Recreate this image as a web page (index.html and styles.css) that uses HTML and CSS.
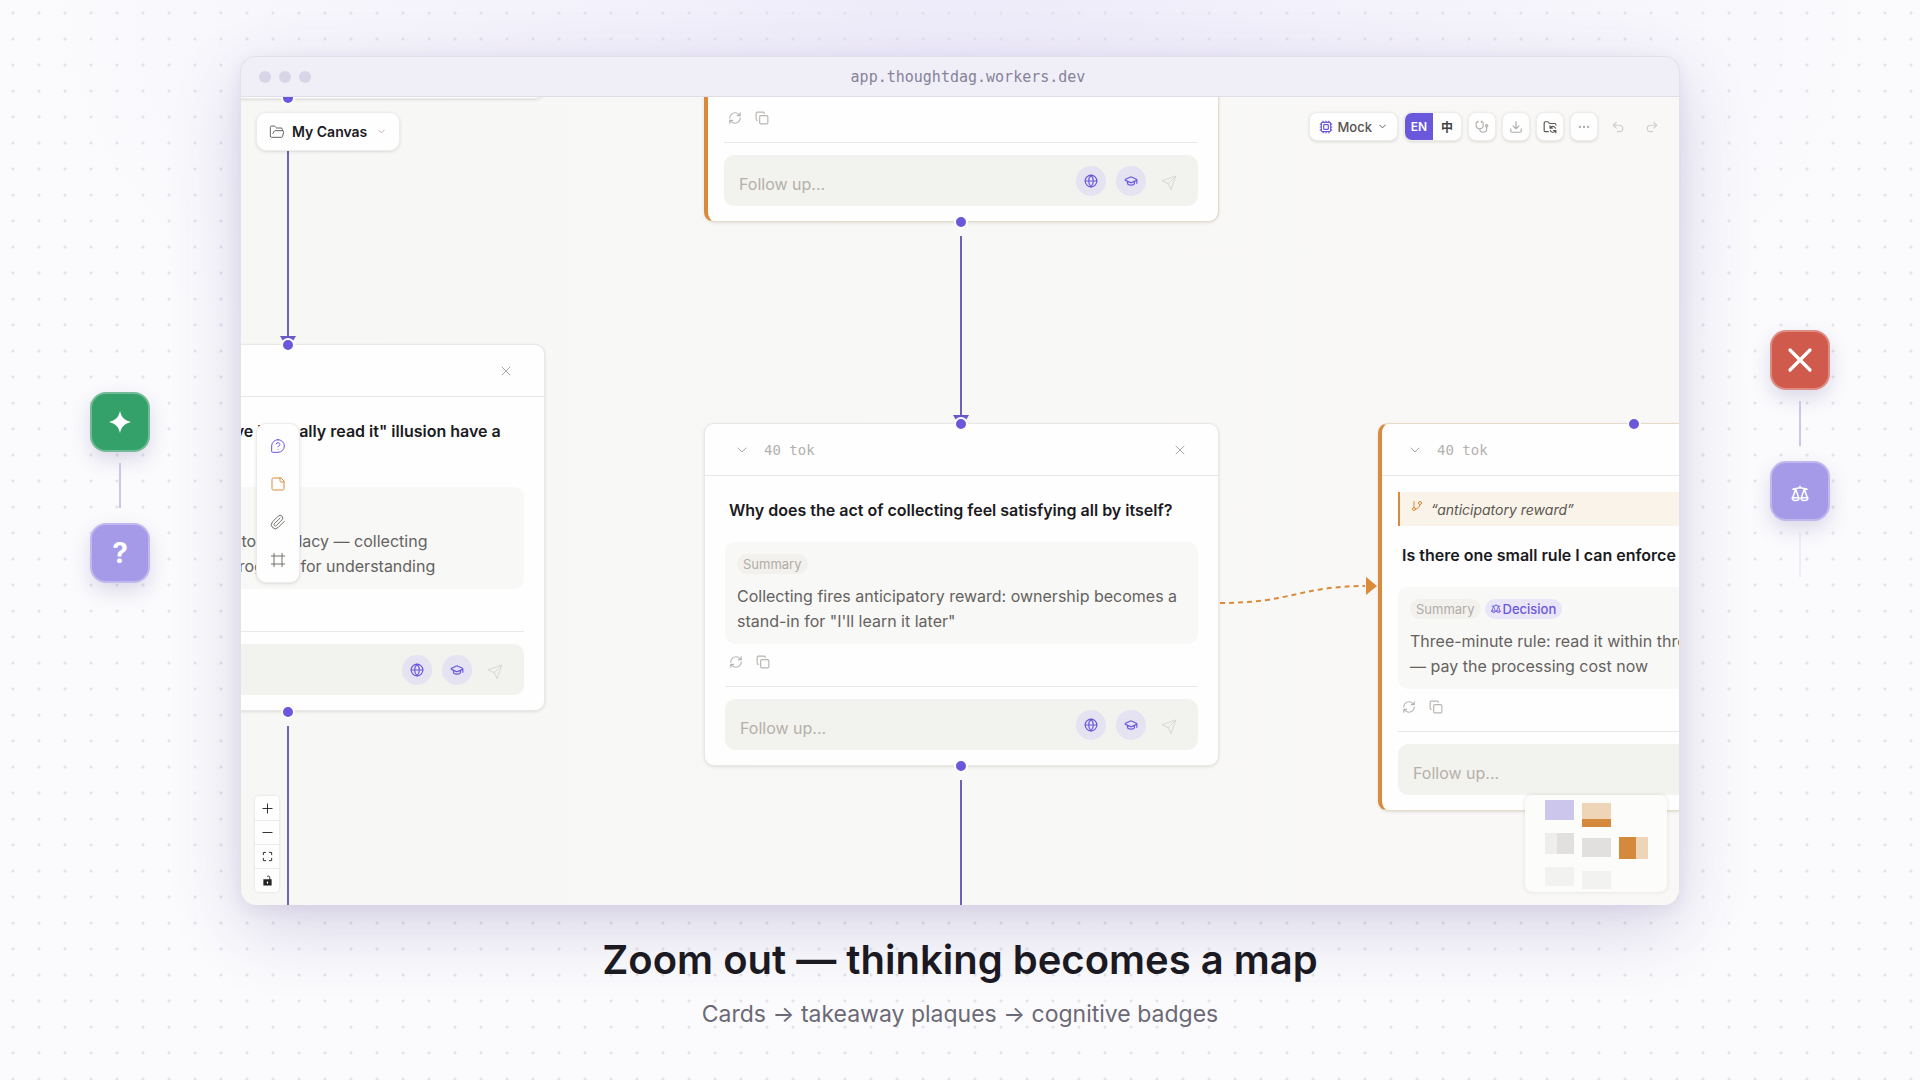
FILE: index.html
```html
<!DOCTYPE html>
<html lang="en">
<head>
<meta charset="utf-8">
<meta name="viewport" content="width=device-width, initial-scale=1">
<title>Zoom out — thinking becomes a map</title>
<link rel="stylesheet" href="styles.css">
</head>
<body>
<svg class="sprite" aria-hidden="true">
  <symbol id="folder-open" viewBox="0 0 24 24"><path d="m6 14 1.5-2.9A2 2 0 0 1 9.24 10H20a2 2 0 0 1 1.94 2.5l-1.54 6a2 2 0 0 1-1.95 1.5H4a2 2 0 0 1-2-2V5a2 2 0 0 1 2-2h3.9a2 2 0 0 1 1.69.9l.81 1.2a2 2 0 0 0 1.67.9H18a2 2 0 0 1 2 2v2"/></symbol>
  <symbol id="chevron" viewBox="0 0 24 24"><path d="m6 9 6 6 6-6"/></symbol>
  <symbol id="close" viewBox="0 0 24 24"><path d="M18 6 6 18M6 6l12 12"/></symbol>
  <symbol id="cpu" viewBox="0 0 24 24"><rect x="4" y="4" width="16" height="16" rx="2"/><rect x="8" y="8" width="8" height="8" rx="1"/><path d="M12 20v2M12 2v2M17 20v2M17 2v2M2 12h2M2 17h2M2 7h2M20 12h2M20 17h2M20 7h2M7 20v2M7 2v2"/></symbol>
  <symbol id="stethoscope" viewBox="0 0 24 24"><path d="M11 2v2M5 2v2M5 3H4a2 2 0 0 0-2 2v4a6 6 0 0 0 12 0V5a2 2 0 0 0-2-2h-1M8 15a6 6 0 0 0 12 0v-3"/><circle cx="20" cy="10" r="2"/></symbol>
  <symbol id="download" viewBox="0 0 24 24"><path d="M12 15V3M21 15v4a2 2 0 0 1-2 2H5a2 2 0 0 1-2-2v-4M7 10l5 5 5-5"/></symbol>
  <symbol id="folder-sync" viewBox="0 0 24 24"><path d="M9 20H4a2 2 0 0 1-2-2V5a2 2 0 0 1 2-2h3.9a2 2 0 0 1 1.69.9l.81 1.2a2 2 0 0 0 1.67.9H20a2 2 0 0 1 2 2v.5M12 10v4h4M12 14l1.500-1.600a4.900 4.900 0 0 1 8 1.600M22 22v-4h-4M22 18l-1.500 1.600a4.900 4.900 0 0 1-8-1.600"/></symbol>
  <symbol id="ellipsis" viewBox="0 0 24 24"><circle cx="12" cy="12" r="1"/><circle cx="19" cy="12" r="1"/><circle cx="5" cy="12" r="1"/></symbol>
  <symbol id="undo" viewBox="0 0 24 24"><path d="M9 14 4 9l5-5"/><path d="M4 9h10.500a5.500 5.500 0 0 1 0 11H11"/></symbol>
  <symbol id="redo" viewBox="0 0 24 24"><path d="m15 14 5-5-5-5"/><path d="M20 9H9.500a5.500 5.500 0 0 0 0 11H13"/></symbol>
  <symbol id="question" viewBox="0 0 24 24"><path d="M12 2.500a9.500 9.500 0 1 1 0 19H3.500a1 1 0 0 1-1-1V12A9.500 9.500 0 0 1 12 2.500Z"/><path d="M9.090 9a3 3 0 0 1 5.830 1c0 2-3 3-3 3M12 17h.01"/></symbol>
  <symbol id="note" viewBox="0 0 24 24"><path d="M16 3H5a2 2 0 0 0-2 2v14a2 2 0 0 0 2 2h14a2 2 0 0 0 2-2V8Z"/><path d="M15 3v4a2 2 0 0 0 2 2h4"/></symbol>
  <symbol id="clip" viewBox="0 0 24 24"><path d="m21.440 11.050-9.190 9.190a6 6 0 0 1-8.490-8.490l8.570-8.570A4 4 0 1 1 18 8.840l-8.590 8.570a2 2 0 0 1-2.830-2.830l8.490-8.480"/></symbol>
  <symbol id="frame" viewBox="0 0 24 24"><path d="M22 6H2M22 18H2M6 2v20M18 2v20"/></symbol>
  <symbol id="refresh" viewBox="0 0 24 24"><path d="M3 12a9 9 0 0 1 9-9 9.750 9.750 0 0 1 6.740 2.740L21 8M21 3v5h-5M21 12a9 9 0 0 1-9 9 9.750 9.750 0 0 1-6.740-2.740L3 16M8 16H3v5"/></symbol>
  <symbol id="copy" viewBox="0 0 24 24"><rect x="8" y="8" width="14" height="14" rx="2"/><path d="M4 16c-1.100 0-2-.9-2-2V4c0-1.100.9-2 2-2h10c1.100 0 2 .9 2 2"/></symbol>
  <symbol id="globe" viewBox="0 0 24 24"><circle cx="12" cy="12" r="10"/><path d="M12 2a14.500 14.500 0 0 0 0 20 14.500 14.500 0 0 0 0-20M2 12h20"/></symbol>
  <symbol id="cap" viewBox="0 0 24 24"><path d="M21.420 10.920a1 1 0 0 0-.02-1.840L12.830 5.180a2 2 0 0 0-1.660 0L2.600 9.080a1 1 0 0 0 0 1.830l8.570 3.910a2 2 0 0 0 1.660 0zM22 10v6M6 12.500V16a6 3 0 0 0 12 0v-3.500"/></symbol>
  <symbol id="send" viewBox="0 0 24 24"><path d="m22 2-7 20-4-9-9-4ZM22 2 11 13"/></symbol>
  <symbol id="branch" viewBox="0 0 24 24"><path d="M6 3v12M18 9a9 9 0 0 1-9 9"/><circle cx="18" cy="6" r="3"/><circle cx="6" cy="18" r="3"/></symbol>
  <symbol id="plus" viewBox="0 0 24 24"><path d="M12 2v20M2 12h20"/></symbol>
  <symbol id="minus" viewBox="0 0 24 24"><path d="M2 12h20"/></symbol>
  <symbol id="fit" viewBox="0 0 24 24"><path d="M3 8V3h5M16 3h5v5M21 16v5h-5M8 21H3v-5"/></symbol>
  <symbol id="unlock" viewBox="0 0 24 24"><path class="solid" d="M3 9h18v14H3ZM12 14a2 2 0 0 0-1 3.700V19h2v-1.300a2 2 0 0 0-1-3.700Z"/><path d="M17 10V6a3.500 3.500 0 0 0-5-3.500"/></symbol>
  <symbol id="scales" viewBox="0 0 24 24"><path d="M2.500 5.500C7 5.500 9 3.500 12 3.500s5 2 9.500 2M12 1.500v2M6.300 5.500 2.200 17M6.300 5.500 10.200 17M17.700 5.500 13.800 17M17.700 5.500 21.800 17M1.500 17h9.300c0 5-9.300 5-9.300 0ZM13.200 17h9.300c0 5-9.300 5-9.300 0Z"/></symbol>
  <symbol id="spark" viewBox="0 0 24 24"><path class="solid" d="M12 0c1.600 7 5 10.400 12 12-7 1.600-10.400 5-12 12-1.600-7-5-10.400-12-12C7 10.400 10.400 7 12 0Z"/></symbol>
</svg>

<main class="stage">
  <div class="scene">
    <aside class="trail trail-left">
      <span class="badge badge-green"><svg class="icon icon-lg"><use href="#spark"/></svg></span>
      <span class="link"></span>
      <span class="badge badge-violet">?</span>
    </aside>

    <section class="window">
      <header class="titlebar">
        <span class="lights"><i></i><i></i><i></i></span>
        <span class="url">app.thoughtdag.workers.dev</span>
      </header>

      <div class="canvas">
        <article class="node node-above"></article>

        <article class="node node-branch node-top">
          <div class="body">
            <div class="actions">
              <button aria-label="Regenerate"><svg class="icon"><use href="#refresh"/></svg></button>
              <button aria-label="Copy"><svg class="icon"><use href="#copy"/></svg></button>
            </div>
            <form class="ask">
              <input type="text" placeholder="Follow up..." aria-label="Follow up">
              <button type="button" class="round" aria-label="Web search"><svg class="icon"><use href="#globe"/></svg></button>
              <button type="button" class="round" aria-label="Scholar"><svg class="icon"><use href="#cap"/></svg></button>
              <button type="button" class="send" aria-label="Send"><svg class="icon icon-md"><use href="#send"/></svg></button>
            </form>
          </div>
        </article>

        <article class="node node-left">
          <header class="head">
            <button class="end" aria-label="Close"><svg class="icon icon-md"><use href="#close"/></svg></button>
          </header>
          <div class="body">
            <h2>Does an "I saved it so I've basically read it" illusion have a<br>name?</h2>
            <div class="summary">
              <span class="tags"><span class="tag">Summary</span></span>
              <p>That is called the collector's fallacy — collecting<br>that means swapping progress for understanding</p>
            </div>
            <div class="actions">
              <button aria-label="Regenerate"><svg class="icon"><use href="#refresh"/></svg></button>
              <button aria-label="Copy"><svg class="icon"><use href="#copy"/></svg></button>
            </div>
            <form class="ask">
              <input type="text" aria-label="Follow up">
              <button type="button" class="round" aria-label="Web search"><svg class="icon"><use href="#globe"/></svg></button>
              <button type="button" class="round" aria-label="Scholar"><svg class="icon"><use href="#cap"/></svg></button>
              <button type="button" class="send" aria-label="Send"><svg class="icon icon-md"><use href="#send"/></svg></button>
            </form>
          </div>
        </article>

        <article class="node node-center">
          <header class="head">
            <button aria-label="Collapse"><svg class="icon icon-md"><use href="#chevron"/></svg></button>
            <span class="tokens">40 tok</span>
            <button class="end" aria-label="Close"><svg class="icon icon-md"><use href="#close"/></svg></button>
          </header>
          <div class="body">
            <h2>Why does the act of collecting feel satisfying all by itself?</h2>
            <div class="summary">
              <span class="tags"><span class="tag">Summary</span></span>
              <p>Collecting fires anticipatory reward: ownership becomes a<br>stand-in for "I'll learn it later"</p>
            </div>
            <div class="actions">
              <button aria-label="Regenerate"><svg class="icon"><use href="#refresh"/></svg></button>
              <button aria-label="Copy"><svg class="icon"><use href="#copy"/></svg></button>
            </div>
            <form class="ask">
              <input type="text" placeholder="Follow up..." aria-label="Follow up">
              <button type="button" class="round" aria-label="Web search"><svg class="icon"><use href="#globe"/></svg></button>
              <button type="button" class="round" aria-label="Scholar"><svg class="icon"><use href="#cap"/></svg></button>
              <button type="button" class="send" aria-label="Send"><svg class="icon icon-md"><use href="#send"/></svg></button>
            </form>
          </div>
        </article>

        <article class="node node-branch node-right">
          <header class="head">
            <button aria-label="Collapse"><svg class="icon icon-md"><use href="#chevron"/></svg></button>
            <span class="tokens">40 tok</span>
          </header>
          <div class="body">
            <blockquote><svg class="icon"><use href="#branch"/></svg><em>“anticipatory reward”</em></blockquote>
            <h2>Is there one small rule I can enforce on myself?</h2>
            <div class="summary">
              <span class="tags"><span class="tag">Summary</span><span class="tag tag-decision"><svg class="icon icon-xs"><use href="#scales"/></svg>Decision</span></span>
              <p>Three-minute rule: read it within three minutes<br>— pay the processing cost now</p>
            </div>
            <div class="actions">
              <button aria-label="Regenerate"><svg class="icon"><use href="#refresh"/></svg></button>
              <button aria-label="Copy"><svg class="icon"><use href="#copy"/></svg></button>
            </div>
            <form class="ask">
              <input type="text" placeholder="Follow up..." aria-label="Follow up">
            </form>
          </div>
        </article>

        <svg class="edges" aria-hidden="true">
          <g class="flow">
            <path d="M47 16V241M720 139V321M47 629V2000M720 683V2000"/>
            <path class="tip" d="M39 239h16l-3 5h-10ZM712 318h16l-3 5h-10Z"/>
          </g>
          <path class="quote-edge" d="M979 506C1050 506 1060 489 1124 489"/>
          <path class="quote-tip" d="M1125 480l11 9-11 9Z"/>
          <g class="handles">
            <circle cx="47" cy="1" r="6"/><circle cx="47" cy="248" r="6"/><circle cx="47" cy="615" r="6"/>
            <circle cx="720" cy="125" r="6"/><circle cx="720" cy="327" r="6"/><circle cx="720" cy="669" r="6"/>
            <circle cx="1393" cy="327" r="6"/>
          </g>
        </svg>

        <button class="panel project"><svg class="icon icon-md"><use href="#folder-open"/></svg>My Canvas<svg class="icon icon-xs faint"><use href="#chevron"/></svg></button>

        <nav class="toolbar">
          <button class="panel model"><svg class="icon violet"><use href="#cpu"/></svg>Mock<svg class="icon icon-xs"><use href="#chevron"/></svg></button>
          <div class="panel lang"><button class="on">EN</button><button>中</button></div>
          <button class="panel tool" aria-label="Health check"><svg class="icon"><use href="#stethoscope"/></svg></button>
          <button class="panel tool" aria-label="Download"><svg class="icon"><use href="#download"/></svg></button>
          <button class="panel tool dark" aria-label="Sync folder"><svg class="icon"><use href="#folder-sync"/></svg></button>
          <button class="panel tool" aria-label="More"><svg class="icon"><use href="#ellipsis"/></svg></button>
          <button class="tool ghost" aria-label="Undo"><svg class="icon"><use href="#undo"/></svg></button>
          <button class="tool ghost" aria-label="Redo"><svg class="icon"><use href="#redo"/></svg></button>
        </nav>

        <nav class="panel palette">
          <button class="violet" aria-label="Question"><svg class="icon icon-md"><use href="#question"/></svg></button>
          <button class="amber" aria-label="Note"><svg class="icon icon-md"><use href="#note"/></svg></button>
          <button aria-label="Attachment"><svg class="icon icon-md"><use href="#clip"/></svg></button>
          <button aria-label="Frame"><svg class="icon icon-md"><use href="#frame"/></svg></button>
        </nav>

        <nav class="zoom">
          <button aria-label="Zoom in"><svg class="icon icon-xs"><use href="#plus"/></svg></button>
          <button aria-label="Zoom out"><svg class="icon icon-xs"><use href="#minus"/></svg></button>
          <button aria-label="Fit view"><svg class="icon icon-xs"><use href="#fit"/></svg></button>
          <button aria-label="Lock"><svg class="icon icon-xs"><use href="#unlock"/></svg></button>
        </nav>

        <svg class="minimap" viewBox="0 0 142 97" aria-hidden="true">
          <path fill="#cdc6ec" d="M20 5h29v20H20z"/>
          <path fill="#efd5b8" d="M57 8h29v16H57zM111 42h12v22h-12z"/>
          <path fill="#d5893d" d="M57 24h29v8H57zM94 42h17v22H94z"/>
          <path fill="#eeeeec" d="M20 38h12v21H20z"/>
          <path fill="#e1e0de" d="M32 38h17v21H32zM57 43h29v19H57z"/>
          <path fill="#f2f3f0" d="M20 72h29v19H20zM57 76h29v18H57z"/>
        </svg>
      </div>
    </section>

    <aside class="trail trail-right">
      <span class="badge badge-red"><svg class="icon icon-xl"><use href="#close"/></svg></span>
      <span class="link"></span>
      <span class="badge badge-violet"><svg class="icon icon-scale"><use href="#scales"/></svg></span>
      <span class="link link-faint"></span>
    </aside>
  </div>

  <footer class="caption">
    <h1>Zoom out — thinking becomes a map</h1>
    <p>Cards → takeaway plaques → cognitive badges</p>
  </footer>
</main>
</body>
</html>
```
FILE: styles.css
```css
* { box-sizing: border-box; margin: 0; }

:root {
  --violet: #6a58dc;
  --amber: #d98a3a;
  --ink: #1b1a22;
  --line: #e9e8e6;
}

body {
  background:
    radial-gradient(circle, #e3e2ea 1px, transparent 2px) 0 0 / 26px 26px,
    radial-gradient(ellipse 50% 50% at 50% 0, #eeebfa, transparent),
    #fbfbfd;
  color: var(--ink);
  font-family: Inter, "Noto Sans CJK SC", sans-serif;
}

button {
  display: inline-flex;
  align-items: center;
  justify-content: center;
  padding: 0;
  border: 0;
  background: none;
  color: inherit;
  font: inherit;
}

.sprite { position: absolute; width: 0; height: 0; }

.icon {
  flex: none;
  width: 14px;
  height: 14px;
  fill: none;
  stroke: currentColor;
  stroke-width: 2;
  stroke-linecap: round;
  stroke-linejoin: round;
}
.icon-xs { width: 11px; height: 11px; }
.icon-md { width: 16px; height: 16px; stroke-width: 1.5; }
.icon-lg { width: 22px; height: 22px; }
.icon-xl { width: 40px; height: 40px; }
.icon-scale { width: 18px; height: 18px; margin-top: 6px; }
.solid { fill: currentColor; stroke: none; fill-rule: evenodd; }

.stage {
  display: flex;
  flex-direction: column;
  min-height: 100vh;
  padding-top: 56px;
}

.scene {
  display: grid;
  grid-template-columns: 1fr 75% 1fr;
  flex: 1;
}

/* Window */
.window {
  display: flex;
  flex-direction: column;
  overflow: hidden;
  border: 1px solid #e3e1ec;
  border-bottom-width: 0;
  border-radius: 16px;
  background: #f0eff7;
  box-shadow: 0 24px 70px rgba(75, 55, 140, .2), 0 4px 16px rgba(75, 55, 140, .08);
}

.titlebar {
  display: grid;
  grid-template-columns: 1fr auto 1fr;
  align-items: center;
  height: 40px;
  padding: 0 2px 0 18px;
  border-bottom: 1px solid #dfdde7;
}
.lights { display: flex; gap: 8px; }
.lights i { width: 12px; height: 12px; border-radius: 50%; background: #d8d5e6; }
.url { color: #85829a; font: 15px "DejaVu Sans Mono", monospace; }

.canvas {
  position: relative;
  flex: 1;
  min-height: 808px;
  overflow: hidden;
  background: linear-gradient(90deg, #f7f8f6, #f9f8f6);
}

/* Nodes */
.node {
  position: absolute;
  width: 515px;
  border: 1px solid var(--line);
  border-radius: 10px;
  background: #fefefe;
  box-shadow: 0 1px 3px rgba(40, 40, 30, .12);
}
.node-branch { border-color: #e6dac9; border-left: 4px solid var(--amber); }
.node-above { left: -211px; top: -98px; height: 100px; }
.node-top { left: 463px; top: -14px; }
.node-left { left: -211px; top: 247px; }
.node-center { left: 463px; top: 326px; }
.node-right { left: 1137px; top: 326px; }

.head {
  display: flex;
  align-items: center;
  gap: 14px;
  height: 52px;
  padding: 0 30px 0 29px;
  border-bottom: 1px solid var(--line);
  color: #a9a7a5;
}
.head .end { margin-left: auto; }
.tokens { color: #b3b1ae; font: 14px "DejaVu Sans Mono", monospace; }

.body { padding: 16px 20px 15px; }
.node-branch .body { padding-left: 16px; }
.node-branch .head { padding-left: 25px; }

h2 {
  padding: 6px 4px 0;
  margin-bottom: 20px;
  font-size: 16px;
  font-weight: 600;
  line-height: 24px;
  white-space: nowrap;
}
.node-right h2 { overflow: hidden; }

blockquote {
  display: flex;
  align-items: center;
  gap: 8px;
  height: 34px;
  margin-bottom: 11px;
  padding-left: 11px;
  border-left: 2px solid var(--amber);
  background: #faf3ea;
  color: #5b564f;
  font-size: 14px;
}
blockquote .icon { width: 12px; height: 12px; margin-bottom: 6px; color: var(--amber); }

.summary {
  padding: 12px 12px 10px;
  border-radius: 10px;
  background: #f8f8f7;
  color: #65625e;
}
.summary p { font-size: 16px; line-height: 25px; white-space: nowrap; }

.tags { display: flex; gap: 4px; margin-bottom: 10px; }
.tag {
  display: inline-flex;
  align-items: center;
  gap: 3px;
  height: 20px;
  padding: 0 6px;
  border-radius: 10px;
  background: #f2f1ee;
  color: #b0aca7;
  font-size: 13px;
}
.tag-decision { gap: 2px; background: #e9e6fa; color: var(--violet); font-weight: 500; }
.tag-decision .icon { width: 10px; height: 10px; }

.actions {
  display: flex;
  gap: 13px;
  padding: 11px 4px 17px;
  border-bottom: 1px solid var(--line);
  color: #b8b5b1;
}

.ask {
  display: flex;
  align-items: center;
  gap: 10px;
  height: 51px;
  margin-top: 12px;
  padding: 0 16px 0 15px;
  border-radius: 10px;
  background: #f2f2ee;
}
.ask input {
  flex: 1;
  min-width: 0;
  padding: 6px 0 0;
  border: 0;
  outline: 0;
  background: none;
  font: 16px Inter, sans-serif;
}
.ask input::placeholder { color: #b5b0a9; opacity: 1; }
.round { width: 30px; height: 30px; border-radius: 50%; background: #e5e2f2; color: var(--violet); }
.send { width: 26px; padding-top: 4px; color: #d8d7d4; }

/* Edges */
.edges { position: absolute; inset: 0; width: 100%; height: 100%; fill: none; pointer-events: none; }
.flow { stroke: #6f62b8; stroke-width: 2; }
.tip { fill: #6a58c8; stroke: none; }
.quote-edge { stroke: var(--amber); stroke-width: 2; stroke-dasharray: 5 4; }
.quote-tip { fill: var(--amber); }
.handles { fill: var(--violet); stroke: #fdfdfd; stroke-width: 2; }

/* Floating controls */
.panel {
  border: 1px solid #eeedeb;
  border-radius: 8px;
  background: #fefefe;
  box-shadow: 0 1px 3px rgba(40, 40, 30, .14);
}

.project {
  position: absolute;
  left: 15px;
  top: 15px;
  gap: 7px;
  height: 39px;
  padding: 0 12px;
  border-radius: 10px;
  font-size: 14px;
  font-weight: 600;
}
.project .icon { color: #66635f; }
.project .icon.faint { margin-left: 2px; color: #b5b2ae; }

.toolbar { position: absolute; right: 13px; top: 15px; display: flex; gap: 6px; font-size: 13px; }
.model { gap: 5px; height: 29px; padding: 0 9px; color: #55524e; font-weight: 500; }
.lang { display: flex; height: 29px; overflow: hidden; font-weight: 600; font-size: 12px; color: #44413e; }
.lang button { width: 28px; }
.lang .on { background: var(--violet); color: #fff; }
.tool { width: 28px; height: 29px; color: #b0ada9; }
.dark { color: #5a5753; }
.ghost { color: #cfcdca; }
.violet { color: var(--violet); }
.amber { color: var(--amber); }

.palette {
  position: absolute;
  left: 15px;
  top: 326px;
  display: flex;
  flex-direction: column;
  gap: 6px;
  padding: 6px 5px;
  border-radius: 10px;
}
.palette button { width: 32px; height: 32px; color: #74716d; }
.palette .violet { color: var(--violet); }
.palette .amber { color: var(--amber); }

.zoom {
  position: absolute;
  left: 14px;
  bottom: 13px;
  display: flex;
  flex-direction: column;
  border-radius: 4px;
  background: #fefefe;
  box-shadow: 0 0 3px rgba(40, 40, 30, .12);
}
.zoom button { width: 24px; height: 24px; color: #222; }
.zoom button + button { border-top: 1px solid #ecebe9; }

.minimap {
  position: absolute;
  right: 12px;
  bottom: 13px;
  width: 142px;
  height: 97px;
  border-radius: 8px;
  background: #fcfcfa;
  box-shadow: 0 0 4px rgba(40, 40, 30, .12);
}

/* Badge trails */
.trail { display: flex; flex-direction: column; align-items: center; }
.trail-left { padding-top: 336px; }
.trail-right { padding-top: 274px; }
.badge {
  display: flex;
  align-items: center;
  justify-content: center;
  width: 60px;
  height: 60px;
  border: 2px solid rgba(255, 255, 255, .3);
  border-radius: 16px;
  color: #fff;
  font-size: 28px;
  font-weight: 700;
  box-shadow: 0 8px 20px rgba(75, 55, 140, .18);
}
.badge-green { background-color: #34a06a; }
.badge-red { background-color: #d05a4c; }
.badge-violet { background-color: #a59ae8; }
.link { width: 2px; height: 45px; margin: 11px 0 15px; background: #cbc5e6; }
.link-faint { opacity: .25; }

.caption { padding: 29px 24px 49px; text-align: center; }
h1 { font-size: 40px; font-weight: 600; line-height: 52px; }
.caption p { margin-top: 11px; color: #6b6975; font-size: 23px; line-height: 34px; }
```
